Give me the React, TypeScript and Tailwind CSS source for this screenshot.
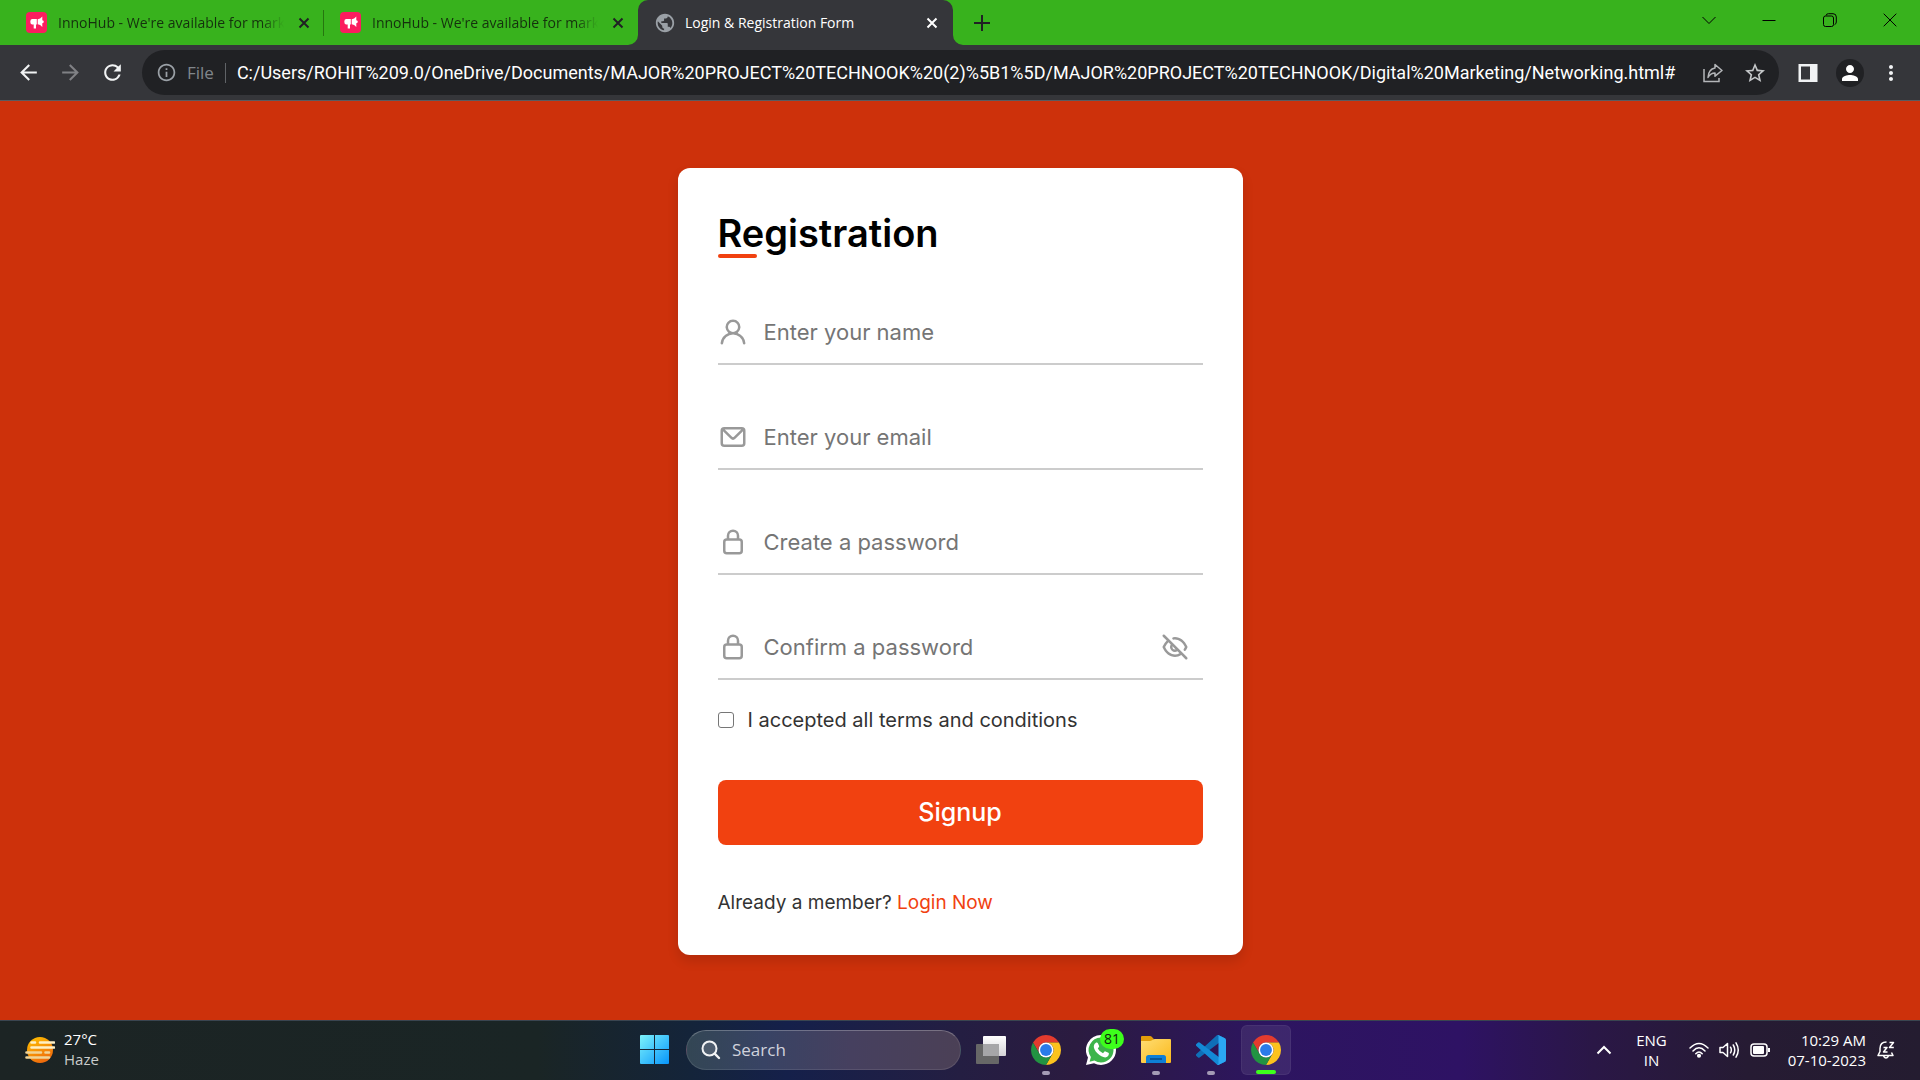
import { useState } from "react";
import type { ReactNode } from "react";
import { MdArrowBack, MdArrowForward, MdRefresh, MdInfoOutline, MdStarBorder, MdPublic, MdPerson, MdMoreVert } from "react-icons/md";

const USER =
  "M15.71,12.71a6,6,0,1,0-7.42,0,10,10,0,0,0-6.22,8.18,1,1,0,0,0,2,.22,8,8,0,0,1,15.9,0,1,1,0,0,0,1,.89h.11a1,1,0,0,0,.88-1.1A10,10,0,0,0,15.71,12.71ZM12,12a4,4,0,1,1,4-4A4,4,0,0,1,12,12Z";
const MAIL =
  "M19,4H5A3,3,0,0,0,2,7V17a3,3,0,0,0,3,3H19a3,3,0,0,0,3-3V7A3,3,0,0,0,19,4Zm-.41,2-5.88,5.88a1,1,0,0,1-1.42,0L5.41,6ZM20,17a1,1,0,0,1-1,1H5a1,1,0,0,1-1-1V7.41l5.88,5.88a3,3,0,0,0,4.24,0L20,7.41Z";
const LOCK =
  "M17,9V7A5,5,0,0,0,7,7V9a3,3,0,0,0-3,3v7a3,3,0,0,0,3,3H17a3,3,0,0,0,3-3V12A3,3,0,0,0,17,9ZM9,7a3,3,0,0,1,6,0V9H9Zm9,12a1,1,0,0,1-1,1H7a1,1,0,0,1-1-1V12a1,1,0,0,1,1-1H17a1,1,0,0,1,1,1Z";
const EYE_SLASH =
  "M10.94,6.08A6.93,6.93,0,0,1,12,6c3.18,0,6.17,2.29,7.91,6a15.23,15.23,0,0,1-.9,1.64,1,1,0,0,0-.16.55,1,1,0,0,0,1.86.5,15.77,15.77,0,0,0,1.21-2.3,1,1,0,0,0,0-.79C19.9,6.91,16.1,4,12,4a7.77,7.77,0,0,0-1.4.12,1,1,0,1,0,.34,2ZM3.71,2.29A1,1,0,0,0,2.29,3.71L5.39,6.8a14.62,14.62,0,0,0-3.31,4.8,1,1,0,0,0,0,.8C4.1,17.09,7.9,20,12,20a9.26,9.26,0,0,0,5.05-1.54l3.24,3.25a1,1,0,0,0,1.42,0,1,1,0,0,0,0-1.42Zm6.36,9.19,2.45,2.45A1.81,1.81,0,0,1,12,14a2,2,0,0,1-2-2A1.81,1.81,0,0,1,10.07,11.48ZM6.8,8.22,8.57,10A4,4,0,0,0,14,15.43L15.59,17A7.24,7.24,0,0,1,12,18c-3.18,0-6.17-2.29-7.91-6A12.09,12.09,0,0,1,6.8,8.22Z";

function Glyph({ d }: { d: string }) {
  return (
    <svg viewBox="0 0 24 24" className="size-[30px] shrink-0 fill-[#999999]" aria-hidden="true">
      <path d={d} />
    </svg>
  );
}

function CloseMark() {
  return (
    <svg viewBox="0 0 12 12" className="size-3" aria-hidden="true">
      <path d="M1.500 1.500l9 9M10.500 1.500l-9 9" stroke="currentColor" strokeWidth="2" fill="none" />
    </svg>
  );
}

function BackgroundTab({ title, divider }: { title: string; divider?: boolean }) {
  return (
    <div className="flex h-full w-[314px] items-center pl-4">
      <span className="flex size-[21px] items-center justify-center rounded bg-[#fb1c5f]">
        <svg viewBox="0 0 14 14" className="size-[14px] fill-white" aria-hidden="true">
          <path d="M2 3H6.800V8.500H6V12.500H3.700V8.500H2Q.300 8.300.300 5.700Q.300 3.200 2 3Z" />
          <path d="M7.700 3.200Q10.300 3 12.300.500V4.200Q13.800 4.500 13.800 5.800Q13.800 7 12.300 7.300V11Q10.300 8.500 7.700 8.300Z" />
        </svg>
      </span>
      <button className="ml-[11px] w-[226px] text-left text-sm whitespace-nowrap text-[#15300e] [mask-image:linear-gradient(to_right,black_90%,transparent)]">
        {title}
      </button>
      <button aria-label="Close tab" className="ml-[14px] text-[#202124]">
        <CloseMark />
      </button>
      {divider && <span className="ml-auto h-[26px] w-px bg-[#26760f]" />}
    </div>
  );
}

function TabStrip() {
  return (
    <header className="flex h-[45px] items-center bg-[#38b21d] pl-[10px]">
      <BackgroundTab title="InnoHub - We're available for mark" divider />
      <BackgroundTab title="InnoHub - We're available for mark" />
      <div className="relative flex h-full w-[315px] items-center rounded-t-[10px] bg-[#35363a] pl-4 text-white">
        <svg viewBox="0 0 10 10" className="absolute bottom-0 -left-[10px] size-[10px] fill-[#35363a]" aria-hidden="true">
          <path d="M10 0V10H0A10 10 0 0 0 10 0Z" />
        </svg>
        <svg viewBox="0 0 10 10" className="absolute -right-[10px] bottom-0 size-[10px] fill-[#35363a]" aria-hidden="true">
          <path d="M0 0V10H10A10 10 0 0 1 0 0Z" />
        </svg>
        <MdPublic size={22} className="text-[#9aa0a6]" />
        <button className="ml-[9px] w-[227px] text-left text-sm whitespace-nowrap">Login &amp; Registration Form</button>
        <button aria-label="Close tab" className="ml-[14px]">
          <CloseMark />
        </button>
      </div>
      <button aria-label="New tab" className="ml-[21px] text-[#202124]">
        <svg viewBox="0 0 16 16" className="size-4" aria-hidden="true">
          <path d="M8 0V16M0 8H16" stroke="currentColor" strokeWidth="2" />
        </svg>
      </button>
      <div className="mb-[6px] ml-auto flex text-black">
        <button aria-label="Search tabs" className="flex w-[60px] justify-center">
          <svg viewBox="0 0 14 14" className="size-[14px]" fill="none" stroke="currentColor">
            <path d="M.5 4l6.500 6.500L13.500 4" />
          </svg>
        </button>
        <button aria-label="Minimize" className="flex w-[60px] justify-center">
          <svg viewBox="0 0 14 14" className="size-[14px]" fill="none" stroke="currentColor">
            <path d="M.5 7.500h13" />
          </svg>
        </button>
        <button aria-label="Restore" className="flex w-[61px] justify-center">
          <svg viewBox="0 0 14 14" className="size-[14px]" fill="none" stroke="currentColor">
            <rect x=".5" y="3" width="10" height="10.500" rx="2" />
            <path d="M3 2.500Q3.300.700 5.500.700H10Q13.300.700 13.300 4V9Q13.300 11 11.500 11.700" />
          </svg>
        </button>
        <button aria-label="Close" className="flex w-[60px] justify-center">
          <svg viewBox="0 0 14 14" className="size-[14px]" fill="none" stroke="currentColor">
            <path d="M.7.700l12.600 12.600M13.300.700L.7 13.300" />
          </svg>
        </button>
      </div>
    </header>
  );
}

function Toolbar() {
  return (
    <nav className="flex h-14 items-center border-b border-[#5a5b5f] bg-[#35363a] pl-4 text-[#f1f3f4]">
      <button aria-label="Back" className="flex w-[42px]">
        <MdArrowBack size={25} />
      </button>
      <button aria-label="Forward" className="flex w-[42px] text-[#808185]">
        <MdArrowForward size={25} />
      </button>
      <button aria-label="Reload" className="flex w-[42px]">
        <MdRefresh size={25} />
      </button>
      <div className="flex h-[45px] min-w-0 flex-1 items-center rounded-full bg-[#202124] pr-3 pl-[14px]">
        <MdInfoOutline size={21} className="shrink-0 text-[#9aa0a6]" />
        <span className="ml-[10px] text-[17px] text-[#80868b]">File</span>
        <span className="mx-[11px] h-5 w-px bg-[#606367]" />
        <input
          aria-label="Address"
          readOnly
          className="min-w-0 flex-1 bg-transparent font-['Roboto',sans-serif] text-lg text-white outline-none"
          value="C:/Users/ROHIT%209.0/OneDrive/Documents/MAJOR%20PROJECT%20TECHNOOK%20(2)%5B1%5D/MAJOR%20PROJECT%20TECHNOOK/Digital%20Marketing/Networking.html#"
        />
        <button aria-label="Share" className="ml-[10px] text-[#b4b6b9]">
          <svg viewBox="0 0 20 20" className="size-5" fill="none" stroke="currentColor" strokeWidth="1.500">
            <path d="M1 6V18.500H16V15" />
            <path d="M12 1.500L19 7.500L12 13.200V10Q7.500 10 5 14.500Q5.500 6 12 5Z" strokeLinejoin="round" />
          </svg>
        </button>
        <button aria-label="Bookmark" className="ml-5 text-[#c4c7c9]">
          <MdStarBorder size={24} />
        </button>
      </div>
      <button aria-label="Side panel" className="ml-[19px]">
        <svg viewBox="0 0 20 20" className="size-5">
          <path d="M.5 1H19.500V19H.5ZM3 3.500V16.500H12V3.500Z" fill="currentColor" fillRule="evenodd" />
        </svg>
      </button>
      <button aria-label="Profile" className="ml-[18px] flex size-7 items-center justify-center rounded-full bg-[#202124] text-white">
        <MdPerson size={24} />
      </button>
      <button aria-label="Menu" className="mr-[17px] ml-[15px]">
        <MdMoreVert size={24} />
      </button>
    </nav>
  );
}

function Field({ id, type, placeholder, icon, children }: { id: string; type: string; placeholder: string; icon: string; children?: ReactNode }) {
  return (
    <div className="flex h-[63px] items-center border-b-2 border-[#cccccc] pb-0.5">
      <label htmlFor={id} aria-label={placeholder}>
        <Glyph d={icon} />
      </label>
      <input
        id={id}
        type={type}
        placeholder={placeholder}
        className="ml-4 h-full min-w-0 flex-1 bg-transparent text-[22px] outline-none placeholder:text-[#757575]"
      />
      {children}
    </div>
  );
}

function RegistrationCard() {
  const [visible, setVisible] = useState(false);
  return (
    <form
      onSubmit={(e) => e.preventDefault()}
      className="w-full max-w-[565px] rounded-xl bg-white px-10 pt-10 pb-9 font-['Inter',sans-serif] text-[#333333] shadow-[0_6px_12px_rgba(0,0,0,0.12)]"
    >
      <h1 className="text-[38px] leading-[50px] font-semibold text-black">Registration</h1>
      <div className="-mt-1 h-1 w-[39px] rounded-full bg-[#f14110]" />
      <div className="mt-11 flex flex-col gap-[42px]">
        <Field id="name" type="text" placeholder="Enter your name" icon={USER} />
        <Field id="email" type="email" placeholder="Enter your email" icon={MAIL} />
        <Field id="password" type="password" placeholder="Create a password" icon={LOCK} />
        <Field id="confirm" type={visible ? "text" : "password"} placeholder="Confirm a password" icon={LOCK}>
          <button type="button" aria-label="Show password" className="mr-[13px]" onClick={() => setVisible(!visible)}>
            <Glyph d={EYE_SLASH} />
          </button>
        </Field>
      </div>
      <div className="mt-6 flex h-8 items-center">
        <input
          id="terms"
          type="checkbox"
          className="size-4 appearance-none rounded-[3px] border border-[#767676] checked:bg-[#f14110]"
        />
        <label htmlFor="terms" className="ml-[14px] text-xl">
          I accepted all terms and conditions
        </label>
      </div>
      <button type="submit" className="mt-11 h-[65px] w-full rounded-lg bg-[#f14110] text-[25px] font-medium text-white">
        Signup
      </button>
      <p className="mt-[42px] text-[19px] leading-8">
        Already a member?{" "}
        <a href="#login" className="text-[#f14110]">
          Login Now
        </a>
      </p>
    </form>
  );
}

function ChromeLogo() {
  return (
    <svg viewBox="2 2 44 44" className="size-[30px]" aria-hidden="true">
      <path fill="#e33b2e" d="M24 13H43.050A22 22 0 0 0 4.950 13L14.470 29.500A11 11 0 0 1 24 13Z" />
      <path fill="#fcc31e" d="M43.050 13A22 22 0 0 1 24 46L33.530 29.500A11 11 0 0 0 24 13Z" />
      <path fill="#229342" d="M24 46A22 22 0 0 1 4.950 13L14.470 29.500A11 11 0 0 0 33.530 29.500Z" />
      <circle cx="24" cy="24" r="11" fill="#fff" />
      <circle cx="24" cy="24" r="8.700" fill="#2a7bea" />
    </svg>
  );
}

function TaskItem({ label, active, running, children }: { label: string; active?: boolean; running?: boolean; children: ReactNode }) {
  return (
    <button
      aria-label={label}
      className={
        active
          ? "relative flex size-[50px] items-center justify-center rounded-md border border-white/5 bg-white/8"
          : "relative flex size-[50px] items-center justify-center rounded-md"
      }
    >
      {children}
      {running && <span className="absolute bottom-0 h-1 w-2 rounded-full bg-[#a49bb5]" />}
      {active && <span className="absolute bottom-0 h-1 w-5 rounded-full bg-[#3dff1c]" />}
    </button>
  );
}

function Taskbar() {
  return (
    <footer className="grid h-[60px] grid-cols-[1fr_auto_1fr] items-center border-t border-[#3a4550] bg-[linear-gradient(90deg,#1c2424_0%,#1a2525_28%,#14243a_36%,#15204a_41%,#241e42_50%,#2b1b40_56%,#2d1560_66%,#2e1264_76%,#2a1746_83%,#261b33_91%,#241c30_100%)] pb-0.5 text-white">
      <button className="flex items-center pl-[25px] text-left">
        <svg viewBox="0 0 30 28" className="size-[30px]" aria-hidden="true">
          <defs>
            <linearGradient id="sun" x1="0" y1="0" x2="0.500" y2="1">
              <stop offset="0" stopColor="#ffc400" />
              <stop offset="1" stopColor="#ef6c0c" />
            </linearGradient>
          </defs>
          <circle cx="15" cy="14" r="13" fill="url(#sun)" />
          <g strokeWidth="2.600" strokeLinecap="round" stroke="#fff0c4">
            <path d="M6.500 6.500H10M15 6.500H29M6.500 11.500H29" />
            <path d="M1.500 16.500H16M20.500 16.500H24M1.500 21.500H24" stroke="#f0d497" />
          </g>
        </svg>
        <span className="ml-[9px] flex flex-col pb-0.5 text-[15px] leading-5">
          <span>27°C</span>
          <span className="text-[#c9cbcb]">Haze</span>
        </span>
      </button>

      <div className="flex items-center gap-[5px]">
        <div className="mr-0.5 flex">
          <TaskItem label="Start">
            <svg viewBox="0 0 29 29" className="size-[29px]" aria-hidden="true">
              <defs>
                <linearGradient id="win" x1="0" y1="0" x2="1" y2="1">
                  <stop offset="0" stopColor="#7df3fb" />
                  <stop offset="1" stopColor="#0795fb" />
                </linearGradient>
              </defs>
              <path fill="url(#win)" d="M1 0H14V14H0V1Q0 0 1 0ZM15 0H28Q29 0 29 1V14H15ZM0 15H14V29H1Q0 29 0 28ZM15 15H29V28Q29 29 28 29H15Z" />
            </svg>
          </TaskItem>
        </div>
        <label className="flex h-10 w-[275px] items-center rounded-full border border-white/10 border-t-white/25 bg-[linear-gradient(90deg,#334654,#384364_28%,#46405f_60%,#4b4056)] pl-[14px]">
          <svg viewBox="0 0 20 20" className="size-5" fill="none" stroke="#f2f3f5" strokeWidth="2" strokeLinecap="round" aria-hidden="true">
            <circle cx="8.500" cy="8.500" r="7" fill="#ffffff22" />
            <path d="M13.700 13.700L18 18" strokeWidth="2.400" />
          </svg>
          <input
            type="search"
            aria-label="Search"
            placeholder="Search"
            className="ml-[11px] min-w-0 flex-1 bg-transparent text-[17px] outline-none placeholder:text-[#d0d2dc]"
          />
        </label>
        <TaskItem label="Task view">
          <svg viewBox="0 0 30 28" className="h-7 w-[30px]" aria-hidden="true">
            <defs>
              <linearGradient id="tv" x1="0" y1="0" x2="0" y2="1">
                <stop offset="0" stopColor="#ffffff" />
                <stop offset="1" stopColor="#d4d3d6" />
              </linearGradient>
            </defs>
            <rect x="0" y="8" width="23" height="20" rx="1" fill="#676767" />
            <rect x="7" y="0" width="23" height="20" rx="1" fill="url(#tv)" />
            <path d="M7 8H23V20H8Q7 20 7 19Z" fill="#a6a6a8" />
          </svg>
        </TaskItem>
        <TaskItem label="Chrome" running>
          <ChromeLogo />
        </TaskItem>
        <TaskItem label="WhatsApp">
          <svg viewBox="0 0 30 30" className="size-[30px]" aria-hidden="true">
            <path fill="#fff" d="M15 0A15 15 0 0 1 15 30Q11 30 8 28.200L0 30L2 22.500A15 15 0 0 1 15 0Z" />
            <path fill="#3cb54a" d="M15 2.500A12.500 12.500 0 0 1 15 27.500Q11.500 27.500 8.400 25.600L3.600 26.700L4.900 22.100A12.500 12.500 0 0 1 15 2.500Z" />
            <path
              fill="#fff"
              d="M10.200 7.600Q11.300 7.200 11.900 8.200L13.100 11Q13.300 11.600 12.900 12.100L11.800 13.500Q13.500 16.800 17 18.300L18.500 16.600Q18.900 16.200 19.500 16.400L22.400 17.800Q23 18.200 22.900 18.800Q22.600 22 19.200 22.400Q15.500 22.300 11.400 18.300Q7.600 14.300 7.800 10.900Q8 8.800 10.200 7.600Z"
            />
          </svg>
          <span className="absolute top-1 right-0.5 flex h-5 w-6 items-center justify-center rounded-full bg-[#3dff1c] text-sm text-[#10240c]">
            81
          </span>
        </TaskItem>
        <TaskItem label="File Explorer" running>
          <svg viewBox="0 0 30 27" className="h-[27px] w-[30px]" aria-hidden="true">
            <defs>
              <linearGradient id="folder" x1="0" y1="0" x2="1" y2="1">
                <stop offset="0" stopColor="#ffdd73" />
                <stop offset="1" stopColor="#fbb91b" />
              </linearGradient>
            </defs>
            <path fill="#e29d0a" d="M0 1Q0 0 1 0H9Q10 0 10.700 .7L12.800 3L10 8H0Z" />
            <path fill="url(#folder)" d="M0 5H9Q10 5 11 4.300L12.500 3.300Q13 3 14 3H29Q30 3 30 4V26Q30 27 29 27H1Q0 27 0 26Z" />
            <path fill="#0e7fd6" d="M5 27V21.500Q5 19 7.500 19H22.500Q25 19 25 21.500V27Z" />
            <path d="M9 23H21" stroke="#07467f" strokeWidth="1.400" />
          </svg>
        </TaskItem>
        <TaskItem label="Visual Studio Code" running>
          <svg viewBox="0 0 100 100" className="size-[30px]" aria-hidden="true">
            <path fill="#0f6fb8" d="M96.460 10.800 75.860.870a6.230 6.230 0 0 0-7.100 1.210L1.300 63.600a4.170 4.170 0 0 0 0 6.160l5.510 5.010a4.170 4.170 0 0 0 5.320.240l81.230-61.620c2.730-2.070 6.650-.130 6.650 3.300v-.240a6.250 6.250 0 0 0-3.550-5.650z" />
            <path fill="#1389d6" d="m96.460 89.200-20.600 9.920a6.230 6.230 0 0 1-7.100-1.210L1.300 36.400a4.170 4.170 0 0 1 0-6.160l5.510-5.010a4.170 4.170 0 0 1 5.320-.240l81.230 61.620c2.730 2.070 6.650.130 6.650-3.300v.240a6.250 6.250 0 0 1-3.550 5.650z" />
            <path fill="#2ba7f3" d="M75.860 99.130a6.230 6.230 0 0 1-7.100-1.210c2.300 2.300 6.250.670 6.250-2.590V4.670c0-3.260-3.940-4.890-6.250-2.590a6.230 6.230 0 0 1 7.100-1.210l20.600 9.910A6.250 6.250 0 0 1 100 16.410v67.170a6.250 6.250 0 0 1-3.540 5.630z" />
          </svg>
        </TaskItem>
        <TaskItem label="Chrome window" active>
          <ChromeLogo />
        </TaskItem>
      </div>

      <div className="flex items-center justify-end pr-[25px] text-[15px] leading-5">
        <button aria-label="Show hidden icons">
          <svg viewBox="0 0 16 16" className="size-4" fill="none" stroke="currentColor" strokeWidth="2">
            <path d="M1.500 11.500L8 5l6.500 6.500" />
          </svg>
        </button>
        <button className="ml-6 text-center">
          ENG
          <br />
          IN
        </button>
        <button aria-label="Network, volume and battery" className="ml-[22px] flex items-center gap-[10px]">
          <svg viewBox="0 0 20 16" className="h-4 w-5" fill="none" stroke="currentColor" strokeWidth="1.500" strokeLinecap="round">
            <path d="M1 6Q10-3 19 6M4 9Q10 2.600 16 9M6.800 11.700Q10 8.200 13.200 11.700" />
            <circle cx="10" cy="13.800" r="1.300" fill="currentColor" />
          </svg>
          <svg viewBox="0 0 21 18" className="h-[18px] w-[21px]" fill="none" stroke="currentColor" strokeWidth="1.500" strokeLinecap="round" strokeLinejoin="round">
            <path d="M1 6.500H4L8.500 2.500V15.500L4 11.500H1Z" />
            <path d="M11.500 6.200Q13.200 9 11.500 11.800M14.300 4Q17.200 9 14.300 14M17 1.800Q21.500 9 17 16.200" />
          </svg>
          <svg viewBox="0 0 20 14" className="h-[14px] w-5" fill="none" stroke="currentColor" strokeWidth="1.500">
            <rect x="1" y="1" width="16" height="12" rx="3" />
            <rect x="3" y="3" width="11" height="8" rx="1" fill="currentColor" stroke="none" />
            <path d="M19 5V9" strokeWidth="2" />
          </svg>
        </button>
        <button className="ml-[18px] text-right">
          10:29 AM
          <br />
          07-10-2023
        </button>
        <button aria-label="Notifications" className="ml-[11px]">
          <svg viewBox="0 0 18 18" className="size-[18px]" fill="none" stroke="currentColor" strokeWidth="1.500" strokeLinejoin="round">
            <path d="M9.500 1Q3 1 3 7.500V10.500L1 14.500H16L14.500 11.500" />
            <path d="M6.500 15Q9 19 11.500 15" />
            <path d="M6.500 6.500H10L6.500 11H10.500M12.500 1.500H16.500L12.500 6.500H16.800" />
          </svg>
        </button>
      </div>
    </footer>
  );
}

export default function App() {
  return (
    <div className="flex min-h-screen flex-col font-['Open_Sans','Noto_Sans',sans-serif]">
      <TabStrip />
      <Toolbar />
      <main className="flex flex-1 items-center justify-center bg-[#cd310b] pt-0.5">
        <RegistrationCard />
      </main>
      <Taskbar />
    </div>
  );
}
